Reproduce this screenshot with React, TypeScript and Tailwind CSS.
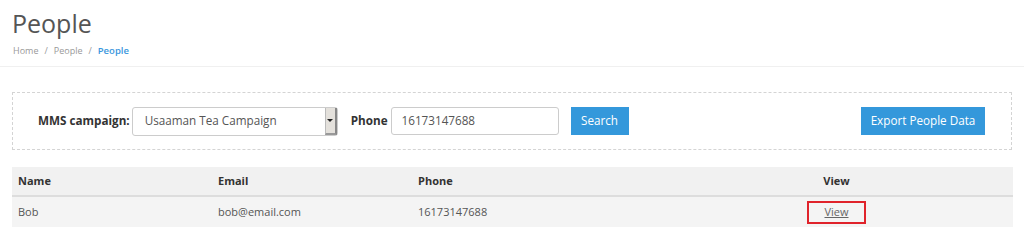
import React from "react";

export default function App() {
  return (
    <div className="w-[1024px] h-[240px] bg-white overflow-hidden" style={{ fontFamily: '"Open Sans", "Noto Sans", sans-serif' }}>
      <div className="px-3 pt-[4px] pb-[8px] border-b border-[#f0f0f0]">
        <h1 className="text-[25px] leading-[38px] text-[#555]">People</h1>
        <div className="flex items-center gap-[6px] text-[9px] leading-[14px] mt-[2px] text-[#999] pl-[1px]">
          <span>Home</span>
          <span>/</span>
          <span>People</span>
          <span>/</span>
          <span className="text-[#3a97dd] font-semibold text-[9.5px]">People</span>
        </div>
      </div>

      <div className="px-3 pt-[25px]">
        <div className="h-[58px] border border-dashed border-[#d4d4d4] flex items-center pl-[25px] pr-[26px]">
          <label className="text-[11.7px] font-bold text-[#333] mr-[2px]">MMS campaign:</label>
          <div className="w-[206px] h-[29px] border border-[#ccc] rounded-[3px] flex items-center justify-between pl-[12px] text-[11.7px] text-[#555]">
            <span>Usaaman Tea Campaign</span>
            <div className="w-[12px] h-[27px] bg-[#e4e1dc] border-l border-[#bbb] border-r-2 border-r-[#888] border-b-2 border-b-[#999] flex items-center justify-center">
              <div className="w-0 h-0 border-l-[3px] border-r-[3px] border-t-[3px] border-l-transparent border-r-transparent border-t-[#222]" />
            </div>
          </div>
          <label className="text-[11.7px] font-bold text-[#333] ml-[13px] mr-[3px]">Phone</label>
          <div className="w-[168px] h-[28px] border border-[#ccc] rounded-[3px] flex items-center pl-[10px] text-[11.7px] text-[#555]">
            16173147688
          </div>
          <button className="ml-[12px] w-[58px] h-[28px] bg-[#3498db] text-white text-[11.7px]">Search</button>
          <div className="flex-1" />
          <button className="w-[124px] h-[28px] bg-[#3498db] text-white text-[11.7px]">Export People Data</button>
        </div>
      </div>

      <div className="px-3 pt-[17px]">
        <div className="w-[1001px] text-[11px]">
          <div className="flex h-[30px] items-center bg-[#f1f1f1] border-b-2 border-[#dddddd] font-bold text-[#333]">
            <div className="w-[200px] pl-[6px]">Name</div>
            <div className="w-[200px] pl-[6px]">Email</div>
            <div className="w-[248px] pl-[6px]">Phone</div>
            <div className="flex-1 text-center">View</div>
          </div>
          <div className="flex h-[30px] items-center bg-[#f4f4f4] text-[#555]">
            <div className="w-[200px] pl-[6px]">Bob</div>
            <div className="w-[200px] pl-[6px]">bob@email.com</div>
            <div className="w-[248px] pl-[6px]">16173147688</div>
            <div className="flex-1 flex justify-center">
              <div className="w-[59px] h-[23px] border-2 border-[#e0232b] flex items-center justify-center">
                <a className="underline text-[#666] text-[11px]">View</a>
              </div>
            </div>
          </div>
        </div>
      </div>
    </div>
  );
}
